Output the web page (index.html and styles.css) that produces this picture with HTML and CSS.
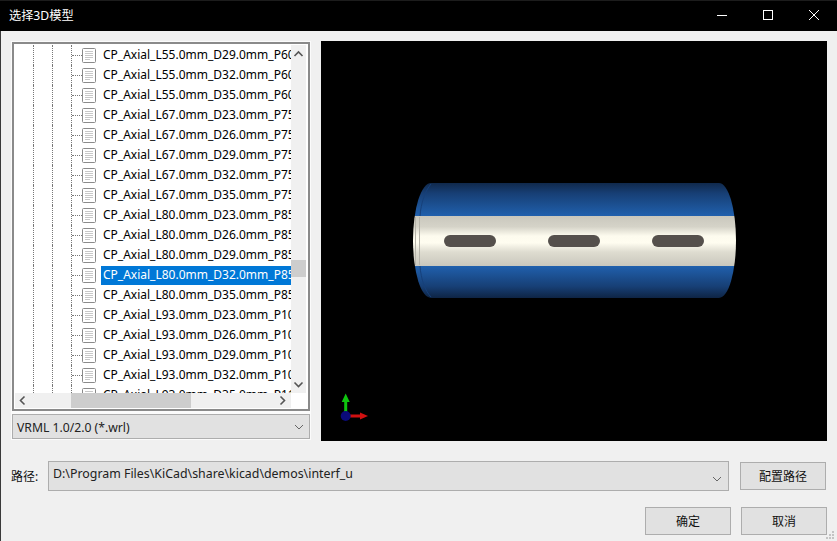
FILE: index.html
```html
<!DOCTYPE html>
<html lang="zh">
<head>
<meta charset="utf-8">
<title>选择3D模型</title>
<link rel="stylesheet" href="styles.css">
</head>
<body>
<svg class="defs" width="0" height="0" aria-hidden="true">
  <symbol id="doc" viewBox="0 0 14 15">
    <rect x="0.5" y="0.5" width="13" height="14" rx="1" fill="#fff" stroke="#8a8a8a"/>
    <path d="M3 3.500h8M3 5.500h8M3 7.500h8M3 9.500h8M3 11.500h5" stroke="#c8c8c8" fill="none"/>
  </symbol>
</svg>
<div class="window">
  <header class="titlebar">
    <span class="title">选择3D模型</span>
    <div class="controls">
      <svg class="ctl" width="46" height="31" viewBox="0 0 46 31"><path d="M18 15.500h10" stroke="#fff"/></svg>
      <svg class="ctl" width="46" height="31" viewBox="0 0 46 31"><rect x="18.500" y="10.500" width="9" height="9" fill="none" stroke="#fff"/></svg>
      <svg class="ctl" width="46" height="31" viewBox="0 0 46 31"><path d="M18 10l10 10M28 10l-10 10" stroke="#fff" fill="none"/></svg>
    </div>
  </header>
  <main class="main">
    <section class="browser">
      <div class="tree">
        <div class="rows">
          <div class="row"><i class="g"></i><i class="g"></i><i class="g"></i><i class="c"></i><svg class="doc"><use href="#doc"/></svg><span class="name">CP_Axial_L55.0mm_D29.0mm_P60.00mm_Horizontal</span></div>
          <div class="row"><i class="g"></i><i class="g"></i><i class="g"></i><i class="c"></i><svg class="doc"><use href="#doc"/></svg><span class="name">CP_Axial_L55.0mm_D32.0mm_P60.00mm_Horizontal</span></div>
          <div class="row"><i class="g"></i><i class="g"></i><i class="g"></i><i class="c"></i><svg class="doc"><use href="#doc"/></svg><span class="name">CP_Axial_L55.0mm_D35.0mm_P60.00mm_Horizontal</span></div>
          <div class="row"><i class="g"></i><i class="g"></i><i class="g"></i><i class="c"></i><svg class="doc"><use href="#doc"/></svg><span class="name">CP_Axial_L67.0mm_D23.0mm_P75.00mm_Horizontal</span></div>
          <div class="row"><i class="g"></i><i class="g"></i><i class="g"></i><i class="c"></i><svg class="doc"><use href="#doc"/></svg><span class="name">CP_Axial_L67.0mm_D26.0mm_P75.00mm_Horizontal</span></div>
          <div class="row"><i class="g"></i><i class="g"></i><i class="g"></i><i class="c"></i><svg class="doc"><use href="#doc"/></svg><span class="name">CP_Axial_L67.0mm_D29.0mm_P75.00mm_Horizontal</span></div>
          <div class="row"><i class="g"></i><i class="g"></i><i class="g"></i><i class="c"></i><svg class="doc"><use href="#doc"/></svg><span class="name">CP_Axial_L67.0mm_D32.0mm_P75.00mm_Horizontal</span></div>
          <div class="row"><i class="g"></i><i class="g"></i><i class="g"></i><i class="c"></i><svg class="doc"><use href="#doc"/></svg><span class="name">CP_Axial_L67.0mm_D35.0mm_P75.00mm_Horizontal</span></div>
          <div class="row"><i class="g"></i><i class="g"></i><i class="g"></i><i class="c"></i><svg class="doc"><use href="#doc"/></svg><span class="name">CP_Axial_L80.0mm_D23.0mm_P85.00mm_Horizontal</span></div>
          <div class="row"><i class="g"></i><i class="g"></i><i class="g"></i><i class="c"></i><svg class="doc"><use href="#doc"/></svg><span class="name">CP_Axial_L80.0mm_D26.0mm_P85.00mm_Horizontal</span></div>
          <div class="row"><i class="g"></i><i class="g"></i><i class="g"></i><i class="c"></i><svg class="doc"><use href="#doc"/></svg><span class="name">CP_Axial_L80.0mm_D29.0mm_P85.00mm_Horizontal</span></div>
          <div class="row"><i class="g"></i><i class="g"></i><i class="g"></i><i class="c"></i><svg class="doc"><use href="#doc"/></svg><span class="name selected">CP_Axial_L80.0mm_D32.0mm_P85.00mm_Horizontal</span></div>
          <div class="row"><i class="g"></i><i class="g"></i><i class="g"></i><i class="c"></i><svg class="doc"><use href="#doc"/></svg><span class="name">CP_Axial_L80.0mm_D35.0mm_P85.00mm_Horizontal</span></div>
          <div class="row"><i class="g"></i><i class="g"></i><i class="g"></i><i class="c"></i><svg class="doc"><use href="#doc"/></svg><span class="name">CP_Axial_L93.0mm_D23.0mm_P100.00mm_Horizontal</span></div>
          <div class="row"><i class="g"></i><i class="g"></i><i class="g"></i><i class="c"></i><svg class="doc"><use href="#doc"/></svg><span class="name">CP_Axial_L93.0mm_D26.0mm_P100.00mm_Horizontal</span></div>
          <div class="row"><i class="g"></i><i class="g"></i><i class="g"></i><i class="c"></i><svg class="doc"><use href="#doc"/></svg><span class="name">CP_Axial_L93.0mm_D29.0mm_P100.00mm_Horizontal</span></div>
          <div class="row"><i class="g"></i><i class="g"></i><i class="g"></i><i class="c"></i><svg class="doc"><use href="#doc"/></svg><span class="name">CP_Axial_L93.0mm_D32.0mm_P100.00mm_Horizontal</span></div>
          <div class="row"><i class="g"></i><i class="g"></i><i class="g"></i><i class="c"></i><svg class="doc"><use href="#doc"/></svg><span class="name">CP_Axial_L93.0mm_D35.0mm_P110.00mm_Horizontal</span></div>
        </div>
        <div class="vbar">
          <svg class="arrow" width="15" height="15" viewBox="0 0 15 15"><path d="M3.500 11l4-4 4 4" fill="none" stroke="#555" stroke-width="1.600"/></svg>
          <div class="vtrack"><div class="vthumb"></div></div>
          <svg class="arrow" width="15" height="15" viewBox="0 0 15 15"><path d="M3.500 4.500l4 4 4-4" fill="none" stroke="#555" stroke-width="1.600"/></svg>
        </div>
        <div class="hbar">
          <svg class="arrow" width="15" height="15" viewBox="0 0 15 15"><path d="M9.500 3.500l-4 4 4 4" fill="none" stroke="#555" stroke-width="1.600"/></svg>
          <div class="htrack"><div class="hthumb"></div></div>
          <svg class="arrow" width="15" height="15" viewBox="0 0 15 15"><path d="M4.500 3.500l4 4-4 4" fill="none" stroke="#555" stroke-width="1.600"/></svg>
        </div>
      </div>
      <div class="filter">
        <span>VRML 1.0/2.0 (*.wrl)</span>
        <svg width="10" height="6" viewBox="0 0 10 6"><path d="M1 1l4 4 4-4" fill="none" stroke="#666"/></svg>
      </div>
    </section>
    <div class="viewport">
      <svg width="506" height="400" viewBox="321 41 506 400">
        <defs>
          <linearGradient id="body" x1="0" y1="183" x2="0" y2="298" gradientUnits="userSpaceOnUse">
            <stop offset="0" stop-color="#10294c"/>
            <stop offset="0.09" stop-color="#173f75"/>
            <stop offset="0.287" stop-color="#2060ad"/>
            <stop offset="0.287" stop-color="#c9c7bd"/>
            <stop offset="0.38" stop-color="#d5d3c8"/>
            <stop offset="0.46" stop-color="#fdfbee"/>
            <stop offset="0.52" stop-color="#fffdf0"/>
            <stop offset="0.6" stop-color="#dedcd0"/>
            <stop offset="0.722" stop-color="#c9c7bd"/>
            <stop offset="0.722" stop-color="#2060ad"/>
            <stop offset="0.9" stop-color="#173f75"/>
            <stop offset="1" stop-color="#0e2444"/>
          </linearGradient>
        </defs>
        <path d="M431 183H719A17 57.500 0 0 1 719 298H431A18 57.500 0 0 1 431 183Z" fill="url(#body)"/>
        <path d="M431 184C425 191 421 203 420 216M420 266C421 279 425 291 431 297" fill="none" stroke="#16407a"/>
        <path d="M415.500 217V265M419.500 217V265" fill="none" stroke="#b5b3a9"/>
        <rect x="444" y="235" width="52" height="12" rx="6" fill="#55504c"/>
        <rect x="548" y="235" width="52" height="12" rx="6" fill="#55504c"/>
        <rect x="652" y="235" width="52" height="12" rx="6" fill="#55504c"/>
        <path d="M345.700 393.500l4 8.500h-2.500v12h-3v-12h-2.500z" fill="#0fc40f"/>
        <path d="M368 416l-8 3.500v-2v-3v-2z" fill="#d01010"/>
        <path d="M350 414.500h10v3h-10z" fill="#d01010"/>
        <circle cx="345.700" cy="416" r="5" fill="#0a0a78"/>
      </svg>
    </div>
  </main>
  <div class="pathrow">
    <span class="label">路径:</span>
    <div class="combo">
      <span>D:\Program Files\KiCad\share\kicad\demos\interf_u</span>
      <svg width="10" height="6" viewBox="0 0 10 6"><path d="M1 1l4 4 4-4" fill="none" stroke="#666"/></svg>
    </div>
    <button class="btn config">配置路径</button>
  </div>
  <div class="actions">
    <button class="btn">确定</button>
    <button class="btn">取消</button>
  </div>
  <svg class="grip" width="8" height="9" viewBox="0 0 8 9"><path d="M6 0h2v2H6zM3 3h2v2H3zM6 3h2v2H6zM0 6h2v2H0zM3 6h2v2H3zM6 6h2v2H6z" fill="#c4c4c4"/></svg>
</div>
</body>
</html>
```
FILE: styles.css
```css
* { box-sizing: border-box; }
html, body { margin: 0; padding: 0; }
body {
  width: 837px;
  height: 541px;
  overflow: hidden;
  background: #f0f0f0;
  font-family: "Noto Sans", "Noto Sans CJK SC", sans-serif;
  font-size: 12px;
  color: #111;
}
.defs { position: absolute; }
.window {
  position: relative;
  width: 837px;
  height: 541px;
  border-left: 1px solid #3a3a3a;
  display: flex;
  flex-direction: column;
}
.titlebar {
  height: 31px;
  margin-left: -1px;
  flex: none;
  background: #000;
  border-top: 1px solid #1c1c1c;
  display: flex;
  align-items: center;
  justify-content: space-between;
  color: #fff;
}
.title {
  padding-left: 9px;
  font-size: 12.2px;
  line-height: 30px;
}
.controls { display: flex; margin-top: -1px; }
.ctl { display: block; }
.main {
  display: flex;
  gap: 10px;
  padding: 10px 0 0 10px;
  height: 410px;
  flex: none;
}
.browser {
  width: 300px;
  height: 399px;
  display: flex;
  flex-direction: column;
  border: 1px solid #fbfbfb;
  border-bottom: 0;
  background: #fbfbfb;
}
.tree {
  height: 369px;
  display: grid;
  grid-template-columns: 276px 15px;
  grid-template-rows: 348px 15px;
  border: 2px solid #8a8a8a;
  padding: 1px 2px 0 1px;
  background: #fff;
}
.rows {
  overflow: hidden;
  background: #fff;
}
.row {
  display: flex;
  align-items: center;
  height: 20px;
  white-space: nowrap;
}
.g {
  flex: none;
  width: 19px;
  height: 20px;
  border-right: 1px dotted #777;
}
.c {
  flex: none;
  width: 10px;
  height: 0;
  border-top: 1px dotted #777;
}
.doc {
  flex: none;
  width: 14px;
  height: 15px;
  margin-right: 5px;
}
.name {
  flex: none;
  padding: 0 2px;
  height: 19px;
  margin-top: 1px;
  line-height: 18px;
  font-size: 12px;
  color: #000;
}
.selected {
  background: #0078d7;
  color: #fff;
}
.vbar {
  background: #f0f0f0;
  display: flex;
  flex-direction: column;
}
.vtrack { flex: 1; padding-top: 200px; }
.vthumb { height: 17px; background: #cdcdcd; }
.hbar {
  grid-column: 1 / 2;
  background: #f0f0f0;
  display: flex;
}
.htrack { flex: 1; padding-left: 41px; }
.hthumb { width: 120px; height: 15px; background: #cdcdcd; }
.arrow { display: block; flex: none; }
.filter {
  height: 25px;
  margin-top: 3px;
  display: flex;
  align-items: center;
  justify-content: space-between;
  padding: 1px 5px 0 4px;
  background: #e1e1e1;
  border: 1px solid #adadad;
  color: #222;
  font-size: 12.2px;
}
.viewport {
  width: 506px;
  height: 400px;
  background: #000;
  flex: none;
}
.viewport svg { display: block; }
.pathrow {
  display: flex;
  align-items: center;
  height: 30px;
  margin-top: 20px;
  padding-left: 10px;
  flex: none;
}
.label { width: 37px; flex: none; }
.combo {
  width: 681px;
  height: 30px;
  flex: none;
  display: flex;
  align-items: flex-start;
  justify-content: space-between;
  padding: 3px 5px 0 4px;
  background: #e1e1e1;
  border: 1px solid #adadad;
  color: #222;
  font-size: 12.38px;
}
.combo svg { margin-top: 11px; margin-right: 1px; }
.btn {
  width: 86px;
  height: 28px;
  padding: 0;
  font: inherit;
  color: #111;
  background: #e1e1e1;
  border: 1px solid #adadad;
}
.config { margin-left: 11px; }
.actions {
  display: flex;
  justify-content: flex-end;
  gap: 10px;
  margin-top: 16px;
  padding-right: 10px;
}
.grip { position: absolute; right: 3px; bottom: 1px; }
```
